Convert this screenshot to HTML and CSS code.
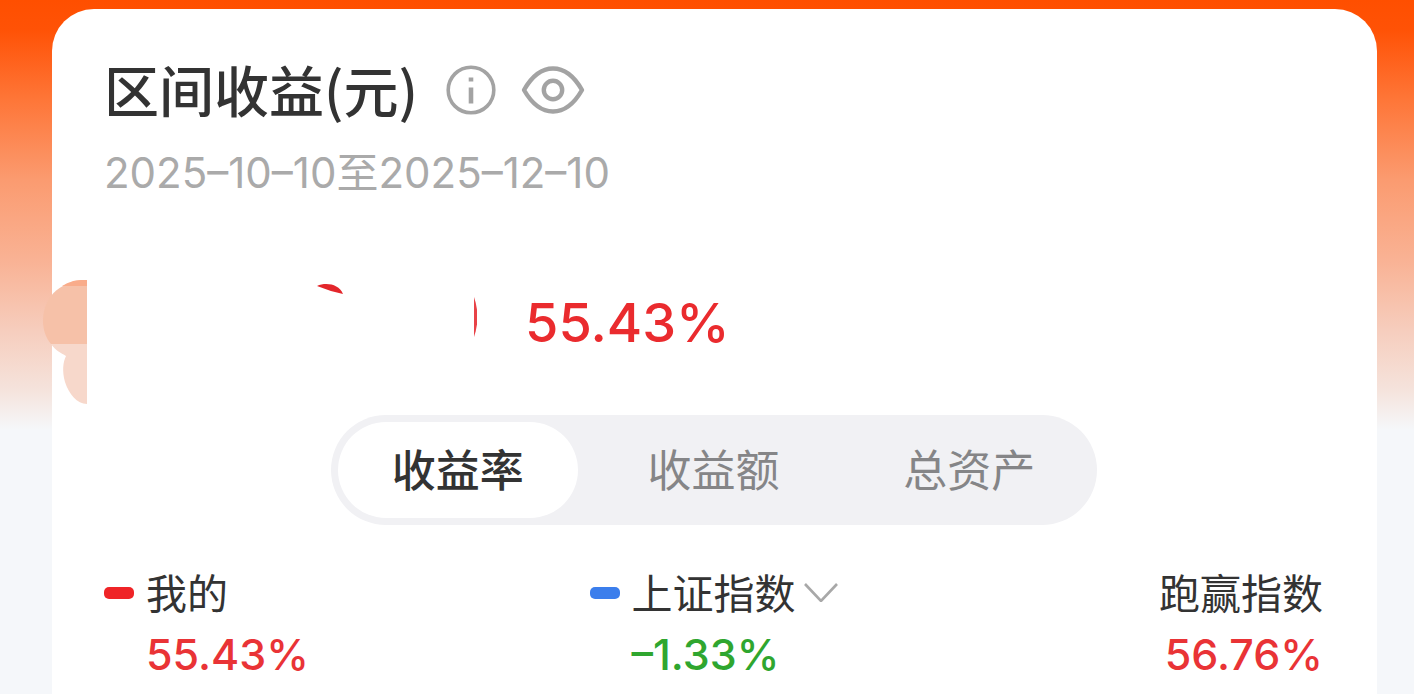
FILE: index.html
```html
<!DOCTYPE html>
<html lang="zh-CN">
<head>
<meta charset="utf-8">
<meta name="viewport" content="width=device-width, initial-scale=1">
<title>区间收益</title>
<link rel="stylesheet" href="styles.css">
</head>
<body>
<main class="page">
  <section class="card">
    <svg class="petals" viewBox="0 0 46 128" aria-hidden="true">
      <path fill="#f7d8cb" d="M8 65 H44 V125 C34 125 26 115 22 103 C19 92 20 83 23 77 C18 74 12 71 8 65 Z"/>
      <path fill="#f6c1a8" d="M44 1 H38 C26 2 14 9 8 17 C2 25 0 34 0 42 C0 51 3 59 8 65 H44 Z"/>
      <path fill="#f9ac8a" d="M44 1 H38 C31 1 24 4 19 7 H44 Z"/>
    </svg>
    <header class="head">
      <h1 class="title">区间收益(元)</h1>
      <button class="icon-button" type="button" aria-label="说明">
        <svg width="50" height="50" viewBox="0 0 50 50" fill="none" stroke="#a3a3a3">
          <circle cx="25" cy="25" r="22.8" stroke-width="3.6"/>
          <path d="M25 22.500V38.500" stroke-width="4.600"/>
          <path d="M25 12.500V16.500" stroke-width="4.600"/>
        </svg>
      </button>
      <button class="icon-button" type="button" aria-label="显示或隐藏金额">
        <svg width="64" height="50" viewBox="0 0 64 50" fill="none" stroke="#a3a3a3" stroke-width="4.400" stroke-linejoin="round">
          <path d="M3 25C11 11 21 3.500 32 3.500S53 11 61 25C53 39 43 46.500 32 46.500S11 39 3 25Z"/>
          <circle cx="32" cy="25" r="9.200"/>
        </svg>
      </button>
    </header>
    <p class="period">2025–10–10至2025–12–10</p>
    <div class="summary">
      <svg class="masked-amount" viewBox="0 0 160 60" aria-hidden="true">
        <path fill="#e3262b" d="M0 5C9 1 22 3 26 13Q12 10 0 5Z"/>
        <path fill="#e84247" d="M157 16Q164 36 157 56Z"/>
      </svg>
      <strong class="rate">55.43%</strong>
    </div>
    <nav class="tabs" aria-label="收益类型">
      <button class="tab tab-active" type="button" aria-pressed="true">收益率</button>
      <button class="tab" type="button" aria-pressed="false">收益额</button>
      <button class="tab" type="button" aria-pressed="false">总资产</button>
    </nav>
    <div class="legend">
      <div class="item">
        <span class="dash dash-red"></span>
        <span class="name">我的</span>
        <span class="value up">55.43%</span>
      </div>
      <div class="item">
        <span class="dash dash-blue"></span>
        <button class="name picker" type="button">上证指数
          <svg width="34" height="22" viewBox="0 0 34 22" fill="none" stroke="#a8a8a8" stroke-width="2.600" aria-hidden="true"><path d="M1 4L17 21L33 4"/></svg>
        </button>
        <span class="value down">–1.33%</span>
      </div>
      <div class="item item-end">
        <span class="name">跑赢指数</span>
        <span class="value up">56.76%</span>
      </div>
    </div>
  </section>
</main>
</body>
</html>
```
FILE: styles.css
```css
* {
  box-sizing: border-box;
}

body {
  margin: 0;
  background: #f5f7fa;
  color: #333;
  font-family: Inter, "Noto Sans CJK SC", sans-serif;
}

button {
  border: 0;
  padding: 0;
  background: none;
  color: inherit;
  font: inherit;
}

.page {
  display: flex;
  min-height: 100vh;
  padding: 9px 37px 0 52px;
  background: linear-gradient(#ff4f00 0, #ff5206 30px, #fe7638 100px, #fb9b70 180px, #f9b294 260px, #f6cdbd 330px, #f5e3dc 390px, #f5f7fa 430px);
}

.card {
  position: relative;
  flex: 1;
  padding: 50px 54px 16px 52px;
  border-radius: 42px 42px 0 0;
  background: #fff;
}

.petals {
  position: absolute;
  top: 270px;
  left: -9px;
  width: 46px;
}

.head {
  display: flex;
  align-items: center;
  height: 62px;
}

.title {
  margin: 0 28px 0 0;
  padding-bottom: 4px;
  font-family: "Noto Sans CJK SC", sans-serif;
  font-size: 55px;
  font-weight: 500;
  line-height: 58px;
}

.icon-button {
  display: flex;
  margin-right: 25px;
}

.period {
  margin: 26px 0 0;
  color: #aaa;
  font-size: 42px;
  line-height: 52px;
}

.summary {
  display: flex;
  align-items: center;
  height: 80px;
  margin-top: 83px;
  padding-left: 213px;
}

.masked-amount {
  width: 160px;
  margin: 0 48px 22px 0;
}

.rate {
  color: #ea2b2e;
  font-size: 54px;
  font-weight: 500;
}

.tabs {
  display: flex;
  gap: 15px;
  width: 766px;
  max-width: 100%;
  height: 110px;
  margin: 53px auto 0;
  padding: 7px;
  border-radius: 55px;
  background: #f1f1f4;
}

.tab {
  flex: 1;
  padding-bottom: 4px;
  border-radius: 48px;
  color: #858587;
  font-family: "Noto Sans CJK SC", sans-serif;
  font-size: 44px;
}

.tab-active {
  background: #fff;
  color: #333;
  font-weight: 500;
}

.legend {
  display: grid;
  grid-template-columns: 1fr auto 1fr;
  margin-top: 37px;
}

.item {
  display: grid;
  grid-template-columns: 30px auto;
  column-gap: 12px;
  justify-content: start;
  align-items: center;
}

.item-end {
  grid-template-columns: auto;
  justify-content: end;
  justify-items: end;
}

.dash {
  height: 12px;
  border-radius: 5px;
}

.dash-red {
  background: #ef2427;
}

.dash-blue {
  background: #3b7eec;
}

.name {
  padding-bottom: 4px;
  font-family: "Noto Sans CJK SC", sans-serif;
  font-size: 41px;
  line-height: 58px;
}

.picker {
  display: flex;
  align-items: center;
  gap: 8px;
}

.value {
  grid-column: -2;
  font-size: 43px;
  font-weight: 500;
  line-height: 60px;
}

.up {
  color: #e93336;
}

.down {
  color: #2fa62f;
}
```
